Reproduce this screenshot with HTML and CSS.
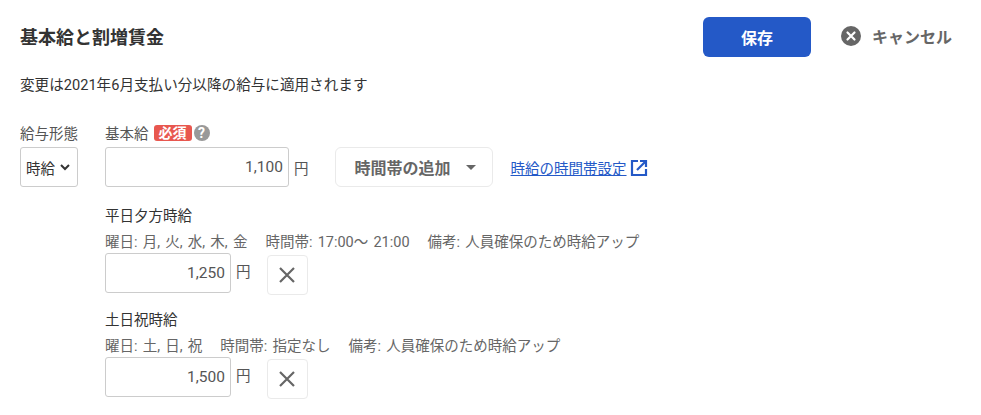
FILE: index.html
```html
<!DOCTYPE html>
<html lang="ja">
<head>
  <meta charset="UTF-8">
  <title>基本給と割増賃金</title>
  <link rel="stylesheet" href="styles.css">
</head>
<body>
  <div class="page">
    <div class="header">
      <h1 class="title">基本給と割増賃金</h1>
      <div class="actions">
        <button class="save">保存</button>
        <button class="cancel">
          <svg width="20" height="20" viewBox="0 0 20 20"><circle cx="10" cy="10" r="10" fill="#666"/><path d="M6.5 6.5l7 7M13.5 6.5l-7 7" stroke="#fff" stroke-width="2.2" stroke-linecap="round"/></svg>
          キャンセル
        </button>
      </div>
    </div>
    <p class="notice">変更は2021年6月支払い分以降の給与に適用されます</p>

    <div class="main">
      <div class="type-col">
        <div class="label">給与形態</div>
        <div class="select">時給
          <svg width="10" height="7" viewBox="0 0 10 7"><path d="M1 1l4 4 4-4" fill="none" stroke="#333" stroke-width="2"/></svg>
        </div>
      </div>
      <div class="wage-col">
        <div class="label">基本給 <span class="required">必須</span><span class="help">?</span></div>
        <div class="row">
          <div class="input wide">1,100</div>
          <span class="unit">円</span>
          <div class="dropdown">時間帯の追加<span class="caret"></span></div>
          <a class="link" href="#">時給の時間帯設定</a>
          <svg class="ext" width="18" height="18" viewBox="0 0 18 18"><path d="M8 2H2v14h14v-6" fill="none" stroke="#2459c7" stroke-width="2.2"/><path d="M7 11l8-8M10 2h6v6" fill="none" stroke="#2459c7" stroke-width="2.2"/></svg>
        </div>

        <div class="band">
          <div class="band-name">平日夕方時給</div>
          <div class="band-info"><span>曜日: 月, 火, 水, 木, 金</span><span>時間帯: 17:00～ 21:00</span><span>備考: 人員確保のため時給アップ</span></div>
          <div class="band-row">
            <div class="input">1,250</div>
            <span class="unit">円</span>
            <button class="remove"><svg width="16" height="16" viewBox="0 0 16 16"><path d="M1 1l14 14M15 1L1 15" stroke="#666" stroke-width="2.2"/></svg></button>
          </div>
        </div>

        <div class="band">
          <div class="band-name">土日祝時給</div>
          <div class="band-info"><span>曜日: 土, 日, 祝</span><span>時間帯: 指定なし</span><span>備考: 人員確保のため時給アップ</span></div>
          <div class="band-row">
            <div class="input">1,500</div>
            <span class="unit">円</span>
            <button class="remove"><svg width="16" height="16" viewBox="0 0 16 16"><path d="M1 1l14 14M15 1L1 15" stroke="#666" stroke-width="2.2"/></svg></button>
          </div>
        </div>
      </div>
    </div>
  </div>
</body>
</html>
```

FILE: styles.css
```css
html, body {
  height: 100%;
}

body {
  margin: 0;
  background: #fff;
  color: #333;
  font-family: Roboto, "Noto Sans CJK JP", sans-serif;
  font-size: 14.5px;
  overflow: hidden;
}

.page {
  padding: 17px 29px 0 20px;
}

.header {
  display: flex;
  justify-content: space-between;
  align-items: center;
  height: 40px;
}

.title {
  margin: 0 0 3px;
  font-size: 18px;
  font-weight: 700;
  color: #333;
}

.actions {
  display: flex;
  align-items: center;
  gap: 30px;
}

.save {
  width: 108px;
  height: 40px;
  border: 0;
  border-radius: 6px;
  background: #2459c7;
  color: #fff;
  font: 700 16px Roboto, "Noto Sans CJK JP", sans-serif;
}

.cancel {
  display: flex;
  align-items: center;
  gap: 11px;
  padding: 0 0 2px;
  border: 0;
  background: none;
  color: #666;
  font: 700 16px Roboto, "Noto Sans CJK JP", sans-serif;
}

.notice {
  margin: 18px 0 0;
  font-size: 14.6px;
  line-height: 20px;
  color: #333;
}

.main {
  display: flex;
  gap: 27px;
  margin-top: 27px;
}

.label {
  display: flex;
  align-items: center;
  height: 20px;
  margin-bottom: 5px;
  color: #555;
}

.select {
  display: flex;
  align-items: center;
  gap: 5px;
  box-sizing: border-box;
  width: 58px;
  height: 40px;
  padding-left: 5px;
  border: 1px solid #ccc;
  border-radius: 3px;
}

.required {
  margin: 2px 0 0 5px;
  padding: 0 5px;
  border-radius: 3px;
  background: #e8574f;
  color: #fff;
  font-size: 14px;
  font-weight: 700;
  line-height: 16px;
}

.help {
  width: 16px;
  height: 16px;
  margin: 2px 0 0 2px;
  border-radius: 50%;
  background: #999;
  color: #fff;
  font-size: 14px;
  font-weight: 700;
  line-height: 16px;
  text-align: center;
}

.row {
  display: flex;
  align-items: center;
}

.band-row {
  display: flex;
  align-items: flex-start;
}

.input {
  box-sizing: border-box;
  width: 126px;
  height: 40px;
  padding-right: 5px;
  border: 1px solid #ccc;
  border-radius: 3px;
  color: #555;
  font-size: 15.5px;
  line-height: 38px;
  text-align: right;
}

.input.wide {
  width: 184px;
}

.unit {
  margin-left: 5px;
  color: #555;
}

.band-row .unit {
  line-height: 40px;
}

.dropdown {
  display: flex;
  align-items: center;
  box-sizing: border-box;
  width: 158px;
  height: 40px;
  margin-left: 26px;
  padding-left: 19px;
  border: 1px solid #eaeaea;
  border-radius: 6px;
  color: #666;
  font-size: 16px;
  font-weight: 700;
}

.caret {
  margin-left: 15px;
  border-top: 5px solid #666;
  border-left: 5px solid transparent;
  border-right: 5px solid transparent;
}

.link {
  margin-left: 18px;
  color: #2459c7;
}

.ext {
  margin: 1px 0 0 3px;
}

.band {
  margin-top: 20px;
}

.band + .band {
  margin-top: 16.5px;
}

.band-name {
  line-height: 20px;
  color: #333;
}

.band-info {
  display: flex;
  gap: 18px;
  margin-top: 6px;
  line-height: 20px;
  word-spacing: 1.6px;
  color: #666;
}

.remove {
  display: flex;
  align-items: center;
  justify-content: center;
  flex: none;
  width: 41px;
  height: 40px;
  margin: 1.5px 0 0 16px;
  padding: 0;
  border: 1px solid #eaeaea;
  border-radius: 4px;
  background: #fff;
}
```
